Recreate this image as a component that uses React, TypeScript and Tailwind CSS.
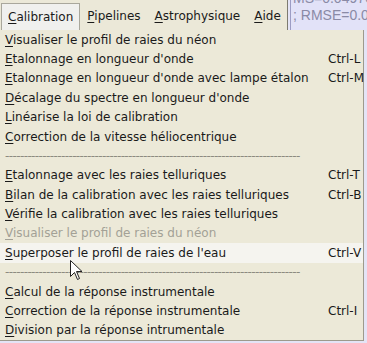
import React from "react";

type Item =
  | { kind: "item"; label: string; key?: string; disabled?: boolean; active?: boolean }
  | { kind: "sep" };

const items: Item[] = [
  { kind: "item", label: "Visualiser le profil de raies du néon" },
  { kind: "item", label: "Etalonnage en longueur d'onde", key: "Ctrl-L" },
  { kind: "item", label: "Etalonnage en longueur d'onde avec lampe étalon", key: "Ctrl-M" },
  { kind: "item", label: "Décalage du spectre en longueur d'onde" },
  { kind: "item", label: "Linéarise la loi de calibration" },
  { kind: "item", label: "Correction de la vitesse héliocentrique" },
  { kind: "sep" },
  { kind: "item", label: "Etalonnage avec les raies telluriques", key: "Ctrl-T" },
  { kind: "item", label: "Bilan de la calibration avec les raies telluriques", key: "Ctrl-B" },
  { kind: "item", label: "Vérifie la calibration avec les raies telluriques" },
  { kind: "item", label: "Visualiser le profil de raies du néon", disabled: true },
  { kind: "item", label: "Superposer le profil de raies de l'eau", key: "Ctrl-V", active: true },
  { kind: "sep" },
  { kind: "item", label: "Calcul de la réponse instrumentale" },
  { kind: "item", label: "Correction de la réponse instrumentale", key: "Ctrl-I" },
  { kind: "item", label: "Division par la réponse intrumentale" },
];

function Mnemonic({ text }: { text: string }) {
  return (
    <span>
      <span className="underline underline-offset-2">{text[0]}</span>
      {text.slice(1)}
    </span>
  );
}

export default function App() {
  return (
    <div className="relative w-[367px] h-[343px] overflow-hidden bg-[#e4e4f6] font-['DejaVu_Sans',sans-serif] text-[12px] text-[#1a1a1a]">
      {/* menu bar */}
      <div className="flex h-[30px]">
        <div className="flex w-[288px] items-center bg-[#ebe8d8] border-r border-[#7d7b70] pl-[1px]">
          <div className="flex h-[27px] items-center bg-[#f0f0ee] border border-[#a9a79c] border-b-0 px-[6px] mt-[3px]">
            <Mnemonic text="Calibration" />
          </div>
          <div className="px-[7px] mt-[2px]">
            <Mnemonic text="Pipelines" />
          </div>
          <div className="px-[7px] mt-[2px]">
            <Mnemonic text="Astrophysique" />
          </div>
          <div className="px-[7px] mt-[2px]">
            <Mnemonic text="Aide" />
          </div>
        </div>
        <div className="ml-[2px] flex-1 border-l border-[#9c9cc4] bg-[#e2e2f8] pl-[2px] font-['Liberation_Sans',sans-serif] text-[14px] leading-[15px] text-[#8a8aa6] whitespace-nowrap overflow-hidden">
          <div className="-mt-[9px]">MS=0.04976</div>
          <div className="mt-[2px]">; RMSE=0.0</div>
        </div>
      </div>

      {/* dropdown */}
      <div className="w-[364px] h-[311px] bg-[#ece9d8] border-r border-b border-[#9d9a8c] flex flex-col">
        {items.map((it, i) =>
          it.kind === "sep" ? (
            <div key={i} className="h-[19.4px] flex items-center pl-[5px] text-[#8d8b80] leading-none tracking-[-0.6px] whitespace-nowrap overflow-hidden">
              {"-".repeat(79)}
            </div>
          ) : (
            <div
              key={i}
              className={
                "h-[19.4px] flex items-center pl-[5px] whitespace-nowrap " +
                (it.active ? "bg-[#f5f4ef] " : "") +
                (it.disabled ? "text-[#a3a196] " : "")
              }
            >
              <div className="w-[323px] shrink-0">
                <Mnemonic text={it.label} />
              </div>
              {it.key && <div className="shrink-0">{it.key}</div>}
            </div>
          )
        )}
      </div>

      {/* mouse pointer */}
      <svg className="absolute left-[70px] top-[260px]" width="14" height="22" viewBox="0 0 14 22">
        <path d="M0.5 0.5 L0.5 16.5 L4.5 12.5 L7.5 19.5 L9.5 18.5 L6.5 11.5 L12 11.5 Z" fill="#fff" stroke="#222" strokeWidth="1" />
      </svg>
    </div>
  );
}
